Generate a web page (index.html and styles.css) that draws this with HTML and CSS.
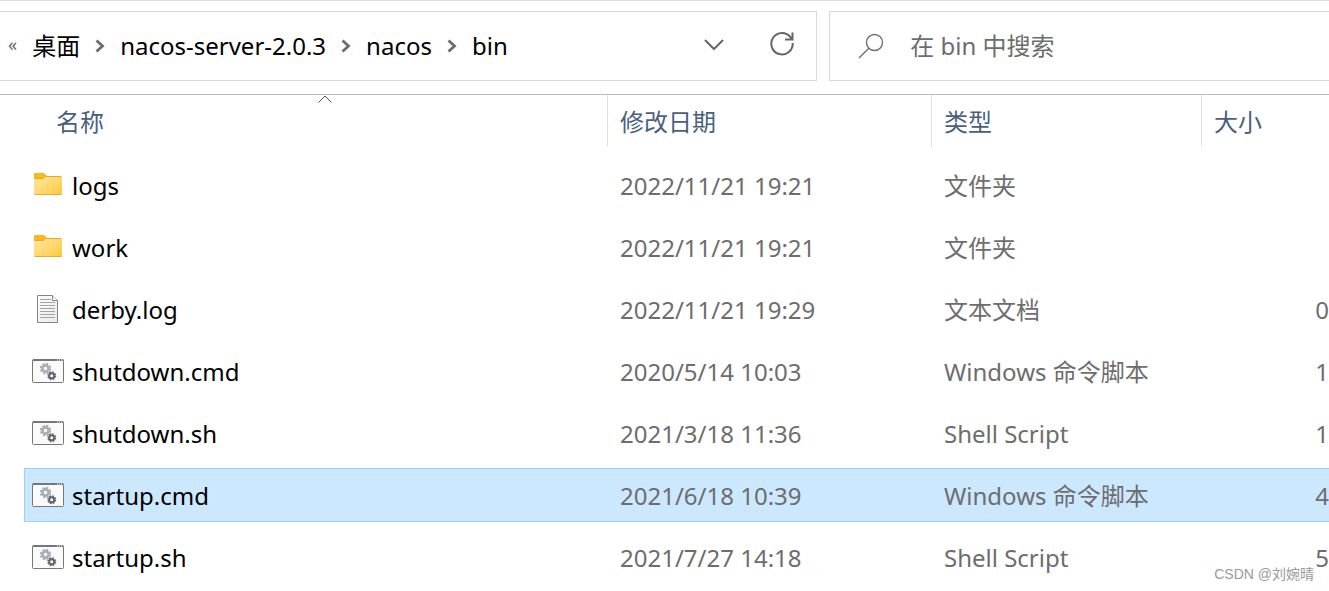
FILE: index.html
```html
<!DOCTYPE html>
<html lang="zh-CN">
<head>
  <meta charset="UTF-8" />
  <title>bin</title>
  <meta name="viewport" content="width=device-width, initial-scale=1" />
  <link rel="stylesheet" href="styles.css">
</head>
<body>
  <!-- shared icons -->
  <svg class="sprite" aria-hidden="true">
    <defs>
      <linearGradient id="folderFill" x1="0" y1="0" x2="1" y2="1">
        <stop offset="0" stop-color="#ffe9a6" />
        <stop offset="1" stop-color="#ffc83c" />
      </linearGradient>
      <linearGradient id="paperFill" x1="0" y1="0" x2="1" y2="1">
        <stop offset="0" stop-color="#fdfdfd" />
        <stop offset="1" stop-color="#ebebeb" />
      </linearGradient>
    </defs>
    <symbol id="chevron" viewBox="0 0 10 14">
      <path d="M1.500 1.500 7.500 7l-6 5.500" fill="none" stroke="#6b6b6b" stroke-width="2.800" />
    </symbol>
    <symbol id="folder" viewBox="0 0 32 32">
      <path d="M2 5a1 1 0 0 1 1-1h9l2.500 2.500V12H2z" fill="#f9b81e" />
      <path d="M2 9.500h9.500l2-2.500H29a1 1 0 0 1 1 1v17a1 1 0 0 1-1 1H3a1 1 0 0 1-1-1z" fill="url(#folderFill)" />
      <path d="M2 9.500h9.500l2-2H29" fill="none" stroke="#eaa91f" />
      <path d="M2.500 25.500h27" stroke="#e9ae2c" />
    </symbol>
    <symbol id="text" viewBox="0 0 32 32">
      <path d="M5.500 2.500h15l5 5v22h-20z" fill="url(#paperFill)" stroke="#858585" />
      <path d="M20.500 2.500v5h5" fill="#fff" stroke="#858585" />
      <path d="M8 6.500h11M8 9.500h15M8 12.500h15M8 15.500h15M8 18.500h15M8 21.500h15M8 24.500h15" stroke="#a3a3a3" />
    </symbol>
    <symbol id="script" viewBox="0 0 32 32">
      <rect x=".5" y="4.500" width="31" height="23" rx="1" fill="#fafafa" stroke="#777" />
      <path d="M1 5h30" stroke="#777" stroke-width="2" />
      <path d="M25 5h1M27 5h1M29 5h1" stroke="#fff" />
      <g fill="none" stroke="#a5afb9">
        <circle cx="13.500" cy="13.500" r="3.100" stroke-width="2.600" />
        <circle cx="13.500" cy="13.500" r="4.700" stroke-width="2" stroke-dasharray="2.200 1.491" />
      </g>
      <g fill="none" stroke="#5d666f">
        <circle cx="19.700" cy="20.700" r="2.500" stroke-width="2" />
        <circle cx="19.700" cy="20.700" r="3.700" stroke-width="1.600" stroke-dasharray="1.700 1.206" />
      </g>
    </symbol>
  </svg>

  <header class="toolbar">
    <nav class="address" aria-label="路径">
      <button class="more" type="button">«</button>
      <a href="#">桌面</a>
      <svg class="chevron"><use href="#chevron" /></svg>
      <a href="#">nacos-server-2.0.3</a>
      <svg class="chevron"><use href="#chevron" /></svg>
      <a href="#">nacos</a>
      <svg class="chevron"><use href="#chevron" /></svg>
      <a href="#">bin</a>
      <div class="tools">
        <button type="button" aria-label="历史记录">
          <svg width="28" height="28" viewBox="0 0 28 28"><path d="M5 10l9 9 9-9" fill="none" stroke="#666" stroke-width="2" /></svg>
        </button>
        <button type="button" aria-label="刷新">
          <svg width="28" height="28" viewBox="0 0 28 28" fill="none" stroke="#666" stroke-width="2"><path d="M24.700 13A10.700 10.700 0 1 1 22.500 7.200L24.500 9.500M24.500 2.500v7H17" /></svg>
        </button>
      </div>
    </nav>
    <label class="search">
      <svg width="26" height="26" viewBox="0 0 26 26" fill="none" stroke="#707070" stroke-width="1.400"><circle cx="16.500" cy="9.500" r="8" /><path d="M10.800 15.200 1 25" /></svg>
      <input type="text" placeholder="在 bin 中搜索" aria-label="在 bin 中搜索">
    </label>
  </header>

  <table class="files">
    <colgroup>
      <col class="col-name">
      <col class="col-date">
      <col class="col-type">
      <col>
    </colgroup>
    <thead>
      <tr>
        <th aria-sort="ascending">
          <button type="button">名称</button>
          <svg class="sort" width="14" height="8" viewBox="0 0 14 8"><path d="M.5 7.500 7 1l6.500 6.500" fill="none" stroke="#555" /></svg>
        </th>
        <th><button type="button">修改日期</button></th>
        <th><button type="button">类型</button></th>
        <th><button type="button">大小</button></th>
      </tr>
    </thead>
    <tbody>
      <tr>
        <td><a class="file" href="#"><svg><use href="#folder" /></svg>logs</a></td>
        <td>2022/11/21 19:21</td>
        <td>文件夹</td>
        <td></td>
      </tr>
      <tr>
        <td><a class="file" href="#"><svg><use href="#folder" /></svg>work</a></td>
        <td>2022/11/21 19:21</td>
        <td>文件夹</td>
        <td></td>
      </tr>
      <tr>
        <td><a class="file" href="#"><svg><use href="#text" /></svg>derby.log</a></td>
        <td>2022/11/21 19:29</td>
        <td>文本文档</td>
        <td class="size">0</td>
      </tr>
      <tr>
        <td><a class="file" href="#"><svg><use href="#script" /></svg>shutdown.cmd</a></td>
        <td>2020/5/14 10:03</td>
        <td>Windows 命令脚本</td>
        <td class="size">1</td>
      </tr>
      <tr>
        <td><a class="file" href="#"><svg><use href="#script" /></svg>shutdown.sh</a></td>
        <td>2021/3/18 11:36</td>
        <td>Shell Script</td>
        <td class="size">1</td>
      </tr>
      <tr class="selected">
        <td><a class="file" href="#"><svg><use href="#script" /></svg>startup.cmd</a></td>
        <td>2021/6/18 10:39</td>
        <td>Windows 命令脚本</td>
        <td class="size">4</td>
      </tr>
      <tr>
        <td><a class="file" href="#"><svg><use href="#script" /></svg>startup.sh</a></td>
        <td>2021/7/27 14:18</td>
        <td>Shell Script</td>
        <td class="size">5</td>
      </tr>
    </tbody>
  </table>

  <div class="watermark">CSDN @刘婉晴</div>
</body>
</html>
```
FILE: styles.css
```css
* {
  box-sizing: border-box;
}
body {
  margin: 0;
  position: relative;
  background: #fff;
  font-family: "Noto Sans", "Noto Sans CJK SC", sans-serif;
  font-size: 24px;
  line-height: 32px;
  color: #000;
}
a {
  color: inherit;
  text-decoration: none;
}
button {
  padding: 0;
  border: none;
  background: none;
  font: inherit;
  color: inherit;
}
svg {
  display: block;
  flex: none;
}
.sprite {
  position: absolute;
  width: 0;
  height: 0;
}

/* address bar and search */
.toolbar {
  display: flex;
  gap: 12px;
  padding: 10px 0 13px;
  border-top: 1px solid #dcdde2;
  border-bottom: 1px solid #b9b9b9;
}
.address,
.search {
  display: flex;
  align-items: center;
  height: 70px;
  border: 1px solid #d9d9d9;
}
.address {
  width: 61.5%;
  gap: 15px;
  padding: 0 20px 0 8px;
  border-left: none;
  white-space: nowrap;
}
.more {
  padding-bottom: 4px;
  font-size: 18px;
  color: #666;
}
.chevron {
  width: 10px;
  height: 14px;
}
.tools {
  display: flex;
  gap: 40px;
  margin-left: auto;
  padding-bottom: 4px;
}
.search {
  flex: 1;
  gap: 26px;
  padding-left: 28px;
  border-right: none;
}
.search input {
  flex: 1;
  min-width: 0;
  padding: 0;
  border: none;
  outline: none;
  background: none;
  font: inherit;
}
.search input::placeholder {
  color: #6d6d6d;
}

/* file list */
.files {
  width: calc(100% - 24px);
  margin-left: 24px;
  table-layout: fixed;
  border-spacing: 0;
  color: #6d6d6d;
}
.col-name {
  width: 583px;
}
.col-date {
  width: 324px;
}
.col-type {
  width: 270px;
}
th {
  position: relative;
  padding: 0 0 7px;
  font-weight: normal;
}
th button {
  display: block;
  width: 100%;
  height: 52px;
  padding: 2px 0 0 12px;
  border-left: 1px solid #e2e2e2;
  text-align: left;
  color: #4a5f80;
}
th:first-child button {
  padding-left: 32px;
  border-left: none;
}
.sort {
  position: absolute;
  top: 0;
  right: 275px;
}
td {
  height: 62px;
  padding: 2px 0 0 13px;
  border: solid transparent;
  border-width: 4px 0;
  background-clip: padding-box;
  white-space: nowrap;
}
td:first-child {
  padding-left: 8px;
}
td.size {
  text-align: right;
}
.file {
  display: flex;
  align-items: center;
  gap: 8px;
  color: #000;
}
.file svg {
  width: 32px;
  height: 32px;
  margin-bottom: 2px;
}
.selected td {
  background-color: #cce8ff;
  box-shadow: inset 0 1px #99d1ff, inset 0 -1px #99d1ff;
}
.selected td:first-child {
  box-shadow: inset 0 1px #99d1ff, inset 0 -1px #99d1ff, inset 1px 0 #99d1ff;
}

.watermark {
  position: absolute;
  right: 15px;
  bottom: 4px;
  font-family: "Liberation Sans", "Noto Sans CJK SC", sans-serif;
  font-size: 14px;
  line-height: 20px;
  color: #999;
}
```
